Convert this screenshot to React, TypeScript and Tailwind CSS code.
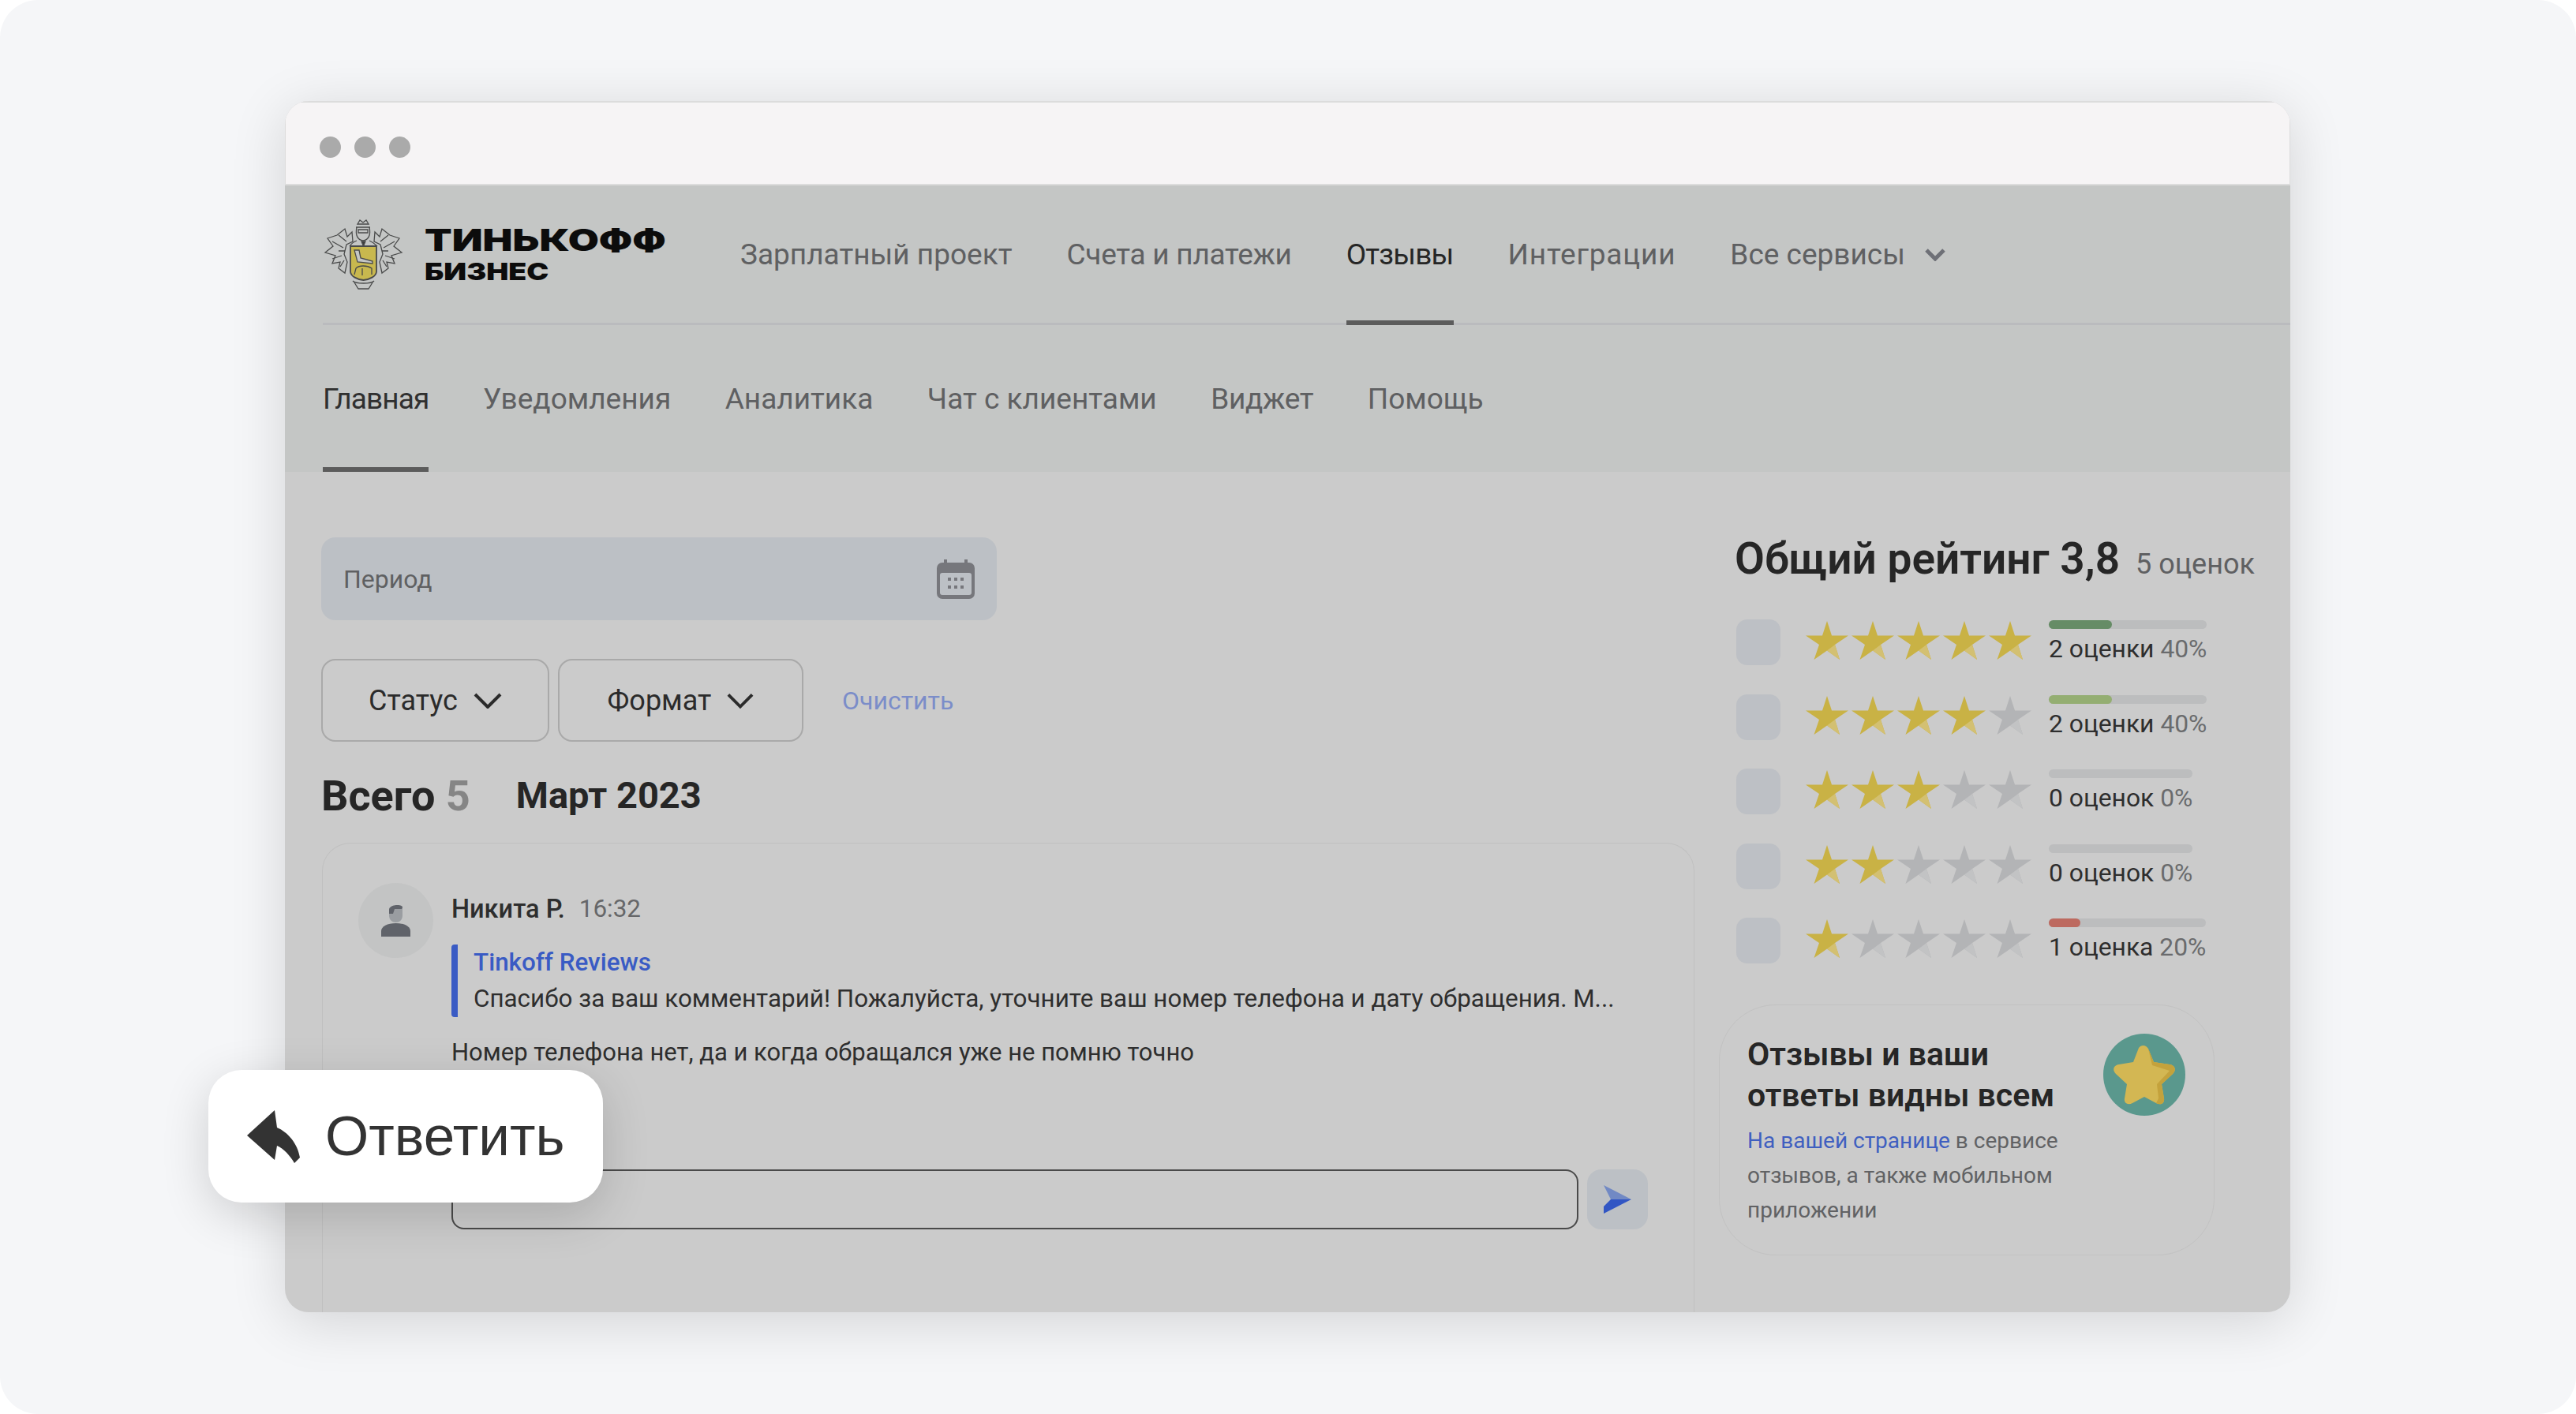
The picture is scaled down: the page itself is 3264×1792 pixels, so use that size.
const Star = ({ on }: { on: boolean }) => (
  <svg width="54" height="49" viewBox="0 0 54 49">
    <polygon
      points="27,0 33,18.5 54,18.5 37,30 43,49 27,37.5 10.5,49 17,30 0,18.5 21,18.5"
      fill={on ? "#c9b245" : "#b3b4b6"}
    />
    <polygon points="27,37.5 37,30 43,49" fill={on ? "#d3c072" : "#c2c3c4"} />
  </svg>
);

const Chevron = ({ className }: { className: string }) => (
  <svg className={className} viewBox="0 0 36 20" fill="none">
    <path d="M2 2 L18 18 L34 2" stroke="currentColor" strokeWidth="4" />
  </svg>
);

const Emblem = () => (
  <svg width="103" height="92" viewBox="2 0 99 92" fill="none" stroke="#4a4b4b" strokeWidth="1.3">
    <path d="M44 8 L47 3 L51 6 L55 3 L58 8 Z" />
    <path d="M42 12 H60 M43 12 C41 22 44 28 51 29 C58 28 61 22 59 12" />
    <path d="M45 15 H57 V19 H45 Z" />
    <path d="M43 29 C38 31 36 33 34 36 M59 29 C64 31 66 33 69 36" />
    <path d="M49 30 H54 L51.5 36 Z" fill="#3c3d3d" />
    <path d="M18 22 L28 14 L31 24 L37 18 L38 30 L30 34 L27 46 L31 56 L28 70 L20 64 L22 56 L12 58 L16 48 L3 44 L13 36 L6 26 Z" />
    <path d="M85 22 L75 14 L72 24 L66 18 L65 30 L73 34 L76 46 L72 56 L75 70 L83 64 L81 56 L91 58 L87 48 L100 44 L90 36 L97 26 Z" />
    <path d="M12 30 L26 38 M91 30 L77 38 M12 52 L24 48 M91 52 L79 48 M20 22 L30 30 M83 22 L73 30 M20 42 L28 42 M83 42 L75 42 M22 62 L27 54 M81 62 L76 54" />
    <path d="M35 36 H68 V68 C68 74 60 78 51.5 79 C43 78 35 74 35 68 Z" fill="#c8b84e" strokeWidth="1.8" />
    <path d="M40 41 L46 41 L48 51 L63 55 L63 58 L44 56 Z" fill="#c4c6c5" />
    <path d="M42 64 C46 60 56 60 62 64 L62 72 M42 64 L40 72 M50 64 L50 73" />
    <path d="M40 82 L45 90 H58 L63 82" />
    <path d="M38 80 C42 84 61 84 65 80" />
  </svg>
);

const rows = [
  { on: 5, count: "2 оценки", pct: "40%", fill: "w-[40%]", bar: "bg-[#668c66]" },
  { on: 4, count: "2 оценки", pct: "40%", fill: "w-[40%]", bar: "bg-[#94ae72]" },
  { on: 3, count: "0 оценок", pct: "0%", fill: "w-0", bar: "" },
  { on: 2, count: "0 оценок", pct: "0%", fill: "w-0", bar: "" },
  { on: 1, count: "1 оценка", pct: "20%", fill: "w-[20%]", bar: "bg-[#bd6a60]" },
];

export default function App() {
  return (
    <div className="h-[1792px] w-[3264px] overflow-hidden bg-white font-['Roboto',sans-serif]">
      <div className="h-full rounded-[48px] bg-[#f5f6f8] pl-[361px] pt-[128px]">
        <div className="relative w-[2541px]">
          <div className="h-[1535px] overflow-hidden rounded-[30px] bg-[#cbcbcb] shadow-[0_12px_70px_rgba(0,0,0,0.14)]">
            <div className="flex h-[107px] items-center gap-[17px] border-x border-b-2 border-t-2 border-[#dcdcdc] bg-[#f6f4f5] pl-[43px] pt-[10px]">
              <div className="h-[27px] w-[27px] rounded-full bg-[#aaaaaa]"></div>
              <div className="h-[27px] w-[27px] rounded-full bg-[#aaaaaa]"></div>
              <div className="h-[27px] w-[27px] rounded-full bg-[#aaaaaa]"></div>
            </div>

            <div className="bg-[#c4c6c5] pl-[48px]">
              <div className="flex h-[177px] items-center border-b-[3px] border-[#babbbe]">
                <div className="flex w-[529px] items-center">
                  <Emblem />
                  <div className="ml-[26px] flex flex-col pt-[2px] font-['Inter',sans-serif] font-black text-[#0c0c0c]">
                    <span className="origin-left scale-x-[1.33] text-[38px] leading-[42px]">ТИНЬКОФФ</span>
                    <span className="origin-left scale-x-[1.25] text-[30px] leading-[38px]">БИЗНЕС</span>
                  </div>
                </div>
                <nav className="flex h-full items-center gap-[69px] pt-[2px] text-[37px] text-[#5f6062]">
                  <span>Зарплатный проект</span>
                  <span className="tracking-[-0.27px]">Счета и платежи</span>
                  <span className="relative flex h-full items-center tracking-[-0.8px] text-[#262626]">
                    Отзывы
                    <span className="absolute inset-x-0 bottom-[-3px] h-[6px] bg-[#5c5c5c]"></span>
                  </span>
                  <span className="tracking-[0.8px]">Интеграции</span>
                  <span className="flex items-center gap-[24px]">
                    Все сервисы
                    <svg className="h-[16px] w-[28px] text-[#6e7077]" viewBox="0 0 28 16" fill="none">
                      <path d="M3 2 L14 13 L25 2" stroke="currentColor" strokeWidth="5" />
                    </svg>
                  </span>
                </nav>
              </div>
              <div className="flex h-[186px] items-center gap-[68.5px] text-[37px] text-[#5f6062]">
                <span className="relative flex h-full items-center pt-[2px] tracking-[-0.9px] text-[#303030]">
                  Главная
                  <span className="absolute inset-x-0 bottom-0 h-[6px] bg-[#5c5c5c]"></span>
                </span>
                <span className="pt-[2px]">Уведомления</span>
                <span className="pt-[2px]">Аналитика</span>
                <span className="pt-[2px]">Чат с клиентами</span>
                <span className="pt-[2px] tracking-[-0.3px]">Виджет</span>
                <span className="pt-[2px]">Помощь</span>
              </div>
            </div>

            <div className="flex gap-[53px] pl-[46px] pt-[83px]">
              <div className="w-[1740px]">
                <div className="flex h-[105px] w-[856px] items-center justify-between rounded-[18px] bg-[#bcc0c5] pl-[28px] pr-[28px] text-[32px] text-[#5f6062]">
                  Период
                  <svg width="48" height="50" viewBox="0 0 48 50">
                    <rect x="9" y="0" width="4" height="8" fill="#76777c" />
                    <rect x="35" y="0" width="4" height="8" fill="#76777c" />
                    <rect x="0" y="4" width="48" height="46" rx="7" fill="#76777c" />
                    <rect x="4" y="17" width="40" height="28" rx="3" fill="#bcc0c5" />
                    {[14, 22, 30].map((x) =>
                      [23, 33].map((y) => <rect key={`${x}-${y}`} x={x} y={y} width="4" height="4" fill="#76777c" />)
                    )}
                  </svg>
                </div>

                <div className="mt-[49px] flex items-center text-[36px] text-[#2b2b2b]">
                  <div className="flex h-[105px] w-[289px] items-center justify-center gap-[20px] rounded-[18px] border-2 border-[#a9a9a9]">
                    Статус
                    <Chevron className="h-[20px] w-[36px]" />
                  </div>
                  <div className="ml-[11px] flex h-[105px] w-[311px] items-center justify-center gap-[20px] rounded-[18px] border-2 border-[#a9a9a9]">
                    Формат
                    <Chevron className="h-[20px] w-[34px]" />
                  </div>
                  <span className="ml-[49px] text-[32px] text-[#7b8dc9]">Очистить</span>
                </div>

                <div className="mt-[36px] flex h-[64px] items-center font-bold text-[#262626]">
                  <span className="text-[54px]">
                    Всего <span className="text-[#858585]">5</span>
                  </span>
                  <span className="ml-[58px] text-[47px]">Март 2023</span>
                </div>

                <div className="ml-[1px] mt-[28px] flex h-[700px] w-[1739px] rounded-t-[36px] border border-b-0 border-[#c0c0c0] pl-[45px] pt-[50px]">
                  <div className="flex h-[95px] w-[95px] shrink-0 items-center justify-center rounded-full bg-[#c3c4c4]">
                    <svg width="37" height="41" viewBox="0 0 37 41">
                      <path d="M10 6 C10 1 27 -1 27 5 V14 C27 20 23 23 18.5 23 C14 23 10 20 10 14 Z" fill="#9a9da1" />
                      <path d="M10 7 C10 0 27 -1 27 4 L26 6 H17 L15 12 H10 Z" fill="#60636a" />
                      <path d="M0 41 V34 C0 28 8 24 18.5 24 C29 24 37 28 37 34 V41 Z" fill="#60636a" />
                    </svg>
                  </div>
                  <div className="ml-[23px] pt-[13px] text-[31.4px] text-[#2e2e2e]">
                    <div className="flex h-[40px] items-center">
                      <span className="text-[32.5px] font-medium">Никита Р.</span>
                      <span className="ml-[18px] text-[#666769]">16:32</span>
                    </div>
                    <div className="mt-[25px] h-[92px] rounded-[4px] border-l-[8px] border-[#3a5bc4] pl-[20px]">
                      <div className="flex h-[46px] items-center font-medium text-[#3a5bc4]">Tinkoff Reviews</div>
                      <div className="flex h-[46px] items-center whitespace-nowrap">
                        Спасибо за ваш комментарий! Пожалуйста, уточните ваш номер телефона и дату обращения. М...
                      </div>
                    </div>
                    <div className="mt-[25px] flex h-[40px] items-center text-[31px]">
                      Номер телефона нет, да и когда обращался уже не помню точно
                    </div>
                    <div className="mt-[128px] flex items-center gap-[11px]">
                      <div className="h-[76px] w-[1428px] rounded-[16px] border-2 border-[#4a4a4a]"></div>
                      <div className="flex h-[76px] w-[77px] items-center justify-center rounded-[18px] bg-[#bcc0c5]">
                        <svg width="35" height="36" viewBox="0 0 35 36">
                          <polygon points="0,0 35,18 9,18" fill="#7189c4" />
                          <polygon points="9,18 35,18 0,36 0,27" fill="#3156c4" />
                        </svg>
                      </div>
                    </div>
                  </div>
                </div>
              </div>

              <div>
                <div className="-ml-[2px] flex h-[54px] items-baseline whitespace-nowrap">
                  <span className="text-[55px] font-semibold leading-[54px] text-[#262626]">Общий рейтинг 3,8</span>
                  <span className="ml-[20px] text-[36px] leading-[54px] text-[#5f6062]">5 оценок</span>
                </div>
                <div className="mt-[50px] flex flex-col gap-[36.5px]">
                  {rows.map((r) => (
                    <div key={r.on} className="flex h-[58px] items-start">
                      <div className="h-[58px] w-[56px] rounded-[14px] bg-[#bdc0c5]"></div>
                      <div className="ml-[32px] flex gap-[4px] pt-[2px]">
                        {[1, 2, 3, 4, 5].map((n) => (
                          <Star key={n} on={n <= r.on} />
                        ))}
                      </div>
                      <div className="ml-[22px] flex flex-col pt-[1px]">
                        <div className="h-[11px] rounded-full bg-[#bcbdbe]">
                          <div className={`h-full rounded-full ${r.fill} ${r.bar}`}></div>
                        </div>
                        <div className="mt-[7px] whitespace-nowrap text-[31.8px] leading-[36px] text-[#2e2e2e]">
                          {r.count} <span className="text-[#6a6b6d]">{r.pct}</span>
                        </div>
                      </div>
                    </div>
                  ))}
                </div>

                <div className="-ml-[22px] mt-[52px] flex h-[318px] w-[628px] justify-between rounded-[72px] border border-[#c2c2c2] pl-[35px] pr-[36px] pt-[36px]">
                  <div>
                    <div className="text-[41px] font-semibold leading-[52px] text-[#262626]">
                      Отзывы и ваши
                      <br />
                      ответы видны всем
                    </div>
                    <div className="mt-[10px] w-[420px] text-[28px] leading-[44px] text-[#616264]">
                      <span className="text-[#3f5fc0]">На вашей странице</span> в сервисе отзывов, а также мобильном приложении
                    </div>
                  </div>
                  <div className="flex h-[104px] w-[104px] shrink-0 items-center justify-center rounded-full bg-[#5a988d]">
                    <svg width="80" height="76" viewBox="0 0 80 76">
                      <path
                        d="M33 4 C36 0 42 0 45 5 L52 22 L72 25 C79 26 81 32 76 37 L62 50 L65 68 C66 75 60 77 55 74 L40 66 L25 74 C19 77 14 74 15 68 L18 50 L4 37 C-1 32 1 26 8 25 L26 22 Z"
                        fill="#d3b753"
                      />
                      <path
                        d="M45 5 L52 22 L72 25 C79 26 81 32 76 37 L62 50 L65 68 C66 75 60 77 55 74 L58 68 L56 50 L72 33 L50 26 Z"
                        fill="#c4a23c"
                      />
                    </svg>
                  </div>
                </div>
              </div>
            </div>
          </div>

          <div className="absolute left-[-97px] top-[1228px] flex h-[168px] w-[500px] items-center rounded-[42px] bg-white pl-[49px] shadow-[0_16px_60px_rgba(0,0,0,0.16)]">
            <svg width="67" height="67" viewBox="0 0 67 67">
              <path d="M0 32 L35 0 L38 22 C52 28 64 42 67 60 L60 67 C55 58 46 48 38 45 L35 63 Z" fill="#333333" />
            </svg>
            <span className="ml-[32px] font-['Liberation_Sans',sans-serif] text-[71px] leading-[80px] text-[#333333]">Ответить</span>
          </div>
        </div>
      </div>
    </div>
  );
}
